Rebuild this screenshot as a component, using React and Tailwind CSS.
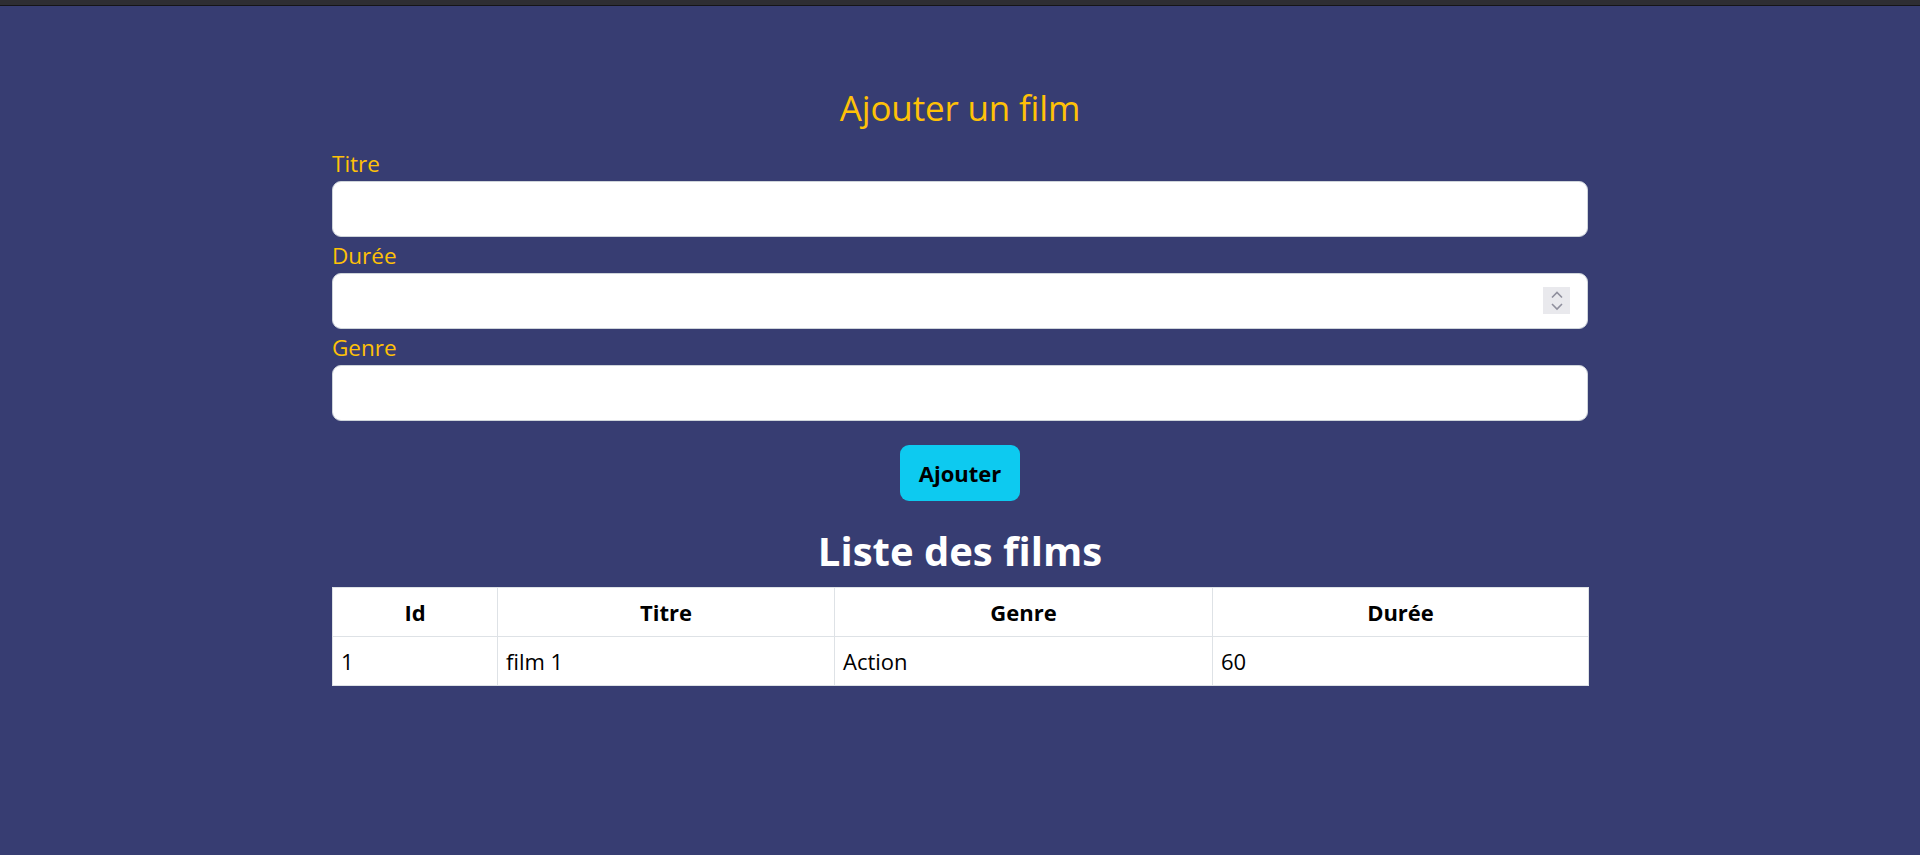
export default function App() {
  const heads = ["Id", "Titre", "Genre", "Durée"];
  const row = ["1", "film 1", "Action", "60"];
  return (
    <div className="min-h-screen bg-[#373d72] font-['Open_Sans','Noto_Sans',sans-serif] text-[22px] leading-[1.5] text-black">
      <div className="h-[6px] bg-[#2e2e33] border-b border-[#151518]" />
      <div className="w-[1256px] mx-auto pt-[81px]">
        <h2 className="text-center text-[#ffc107] text-[35px] leading-[1.2] font-normal mb-[16px] tracking-[-0.005em]">
          Ajouter un film
        </h2>
        <form className="flex flex-col" onSubmit={(e) => e.preventDefault()}>
          <label className="text-[#ffc107] text-[22.5px] h-[36px] leading-[37px]">Titre</label>
          <input
            type="text"
            className="h-[56px] bg-white rounded-[9px] border border-[#ced4da] px-[18px] outline-none"
          />
          <label className="text-[#ffc107] text-[22.5px] h-[36px] leading-[37px]">Durée</label>
          <div className="relative">
            <input
              type="text"
              className="w-full h-[56px] bg-white rounded-[9px] border border-[#ced4da] px-[18px] outline-none"
            />
            <div className="absolute right-[18px] top-[14px] w-[27px] h-[27px] bg-[#e9e9ed]">
              <svg width="27" height="27" viewBox="0 0 27 27" fill="none">
                <path d="M9 10.5 L14 5.5 L19 10.5" stroke="#8f8f9d" strokeWidth="1.6" />
                <path d="M9 17 L14 22 L19 17" stroke="#8f8f9d" strokeWidth="1.6" />
              </svg>
            </div>
          </div>
          <label className="text-[#ffc107] text-[22.5px] h-[36px] leading-[37px]">Genre</label>
          <input
            type="text"
            className="h-[56px] bg-white rounded-[9px] border border-[#ced4da] px-[18px] outline-none"
          />
          <div className="flex justify-center mt-[24px]">
            <button
              type="submit"
              className="h-[56px] px-[19px] rounded-[9px] bg-[#0dcaf0] font-bold text-black leading-[33px]"
            >
              Ajouter
            </button>
          </div>
        </form>
        <h3 className="text-center text-white text-[40px] leading-[48px] font-bold mt-[26px] mb-[12px]">
          Liste des films
        </h3>
        <table className="w-full table-fixed border-collapse bg-white">
          <colgroup>
            <col className="w-[165px]" />
            <col className="w-[337px]" />
            <col className="w-[378px]" />
            <col className="w-[376px]" />
          </colgroup>
          <thead>
            <tr>
              {heads.map((h) => (
                <th
                  key={h}
                  className="border border-[#dee2e6] px-[8px] py-[8px] font-bold text-center leading-[32px]"
                >
                  {h}
                </th>
              ))}
            </tr>
          </thead>
          <tbody>
            <tr>
              {row.map((c, i) => (
                <td
                  key={i}
                  className="border border-[#dee2e6] px-[8px] py-[8px] text-left leading-[32px]"
                >
                  {c}
                </td>
              ))}
            </tr>
          </tbody>
        </table>
      </div>
    </div>
  );
}
